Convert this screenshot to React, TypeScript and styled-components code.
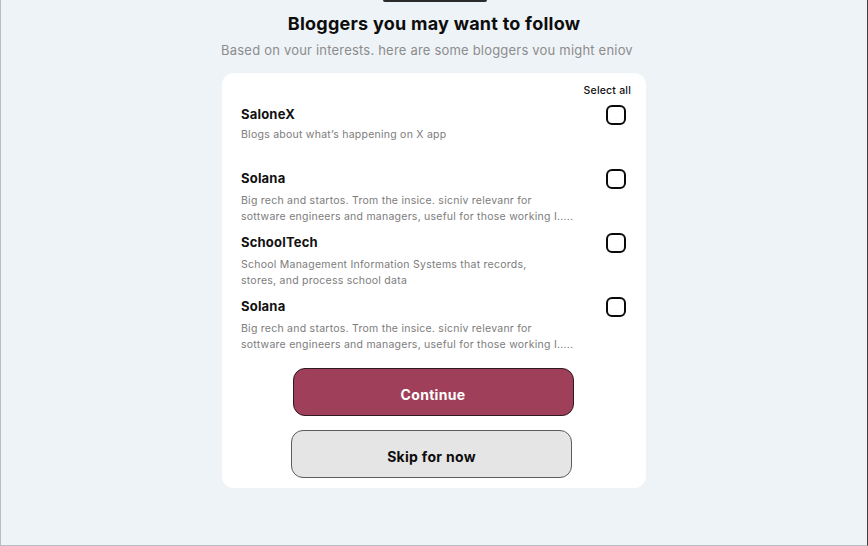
import React from 'react'
import styled, { createGlobalStyle } from 'styled-components'

type Blogger = {
	name: string
	text: string
}

const bloggers: Blogger[] = [
	{ name: 'SaloneX', text: 'Blogs about what’s happening on X app' },
	{
		name: 'Solana',
		text: 'Big rech and startos. Trom the insice. sicniv relevanr for\nsottware engineers and managers, useful for those working I.....',
	},
	{
		name: 'SchoolTech',
		text: 'School Management Information Systems that records,\nstores, and process school data',
	},
	{
		name: 'Solana',
		text: 'Big rech and startos. Trom the insice. sicniv relevanr for\nsottware engineers and managers, useful for those working I.....',
	},
]

const GlobalStyle = createGlobalStyle`
  * { box-sizing: border-box; }
  body {
    margin: 0;
    font-family: "Inter", "Noto Sans", sans-serif;
  }
`

export default function App() {
	return (
		<Page>
			<GlobalStyle />
			<TopTab />
			<Title>Bloggers you may want to follow</Title>
			<Subtitle>Based on vour interests. here are some bloggers vou might eniov</Subtitle>
			<Card>
				<SelectAll>Select all</SelectAll>
				<List>
					{bloggers.map((b, i) => (
						<Row key={i}>
							<Info>
								<Name>{b.name}</Name>
								<Text $multi={b.text.includes('\n')}>{b.text}</Text>
							</Info>
							<Check />
						</Row>
					))}
				</List>
				<Actions>
					<Button $primary>Continue</Button>
					<Button $shift>Skip for now</Button>
				</Actions>
			</Card>
		</Page>
	)
}

const Page = styled.div`
  width: 868px;
  height: 546px;
  background: #eef3f7;
  border-left: 1px solid #b9bdc1;
  border-bottom: 1px solid #b9bdc1;
  border-right: 1px solid #3d3d3d;
  display: flex;
  flex-direction: column;
  align-items: center;
  overflow: hidden;
`

const TopTab = styled.div`
  width: 104px;
  height: 2px;
  margin-left: 1px;
  background: #2b2b2b;
  border-radius: 0 0 4px 4px;
`

const Title = styled.h1`
  margin: 11px 0 0;
  font-size: 18px;
  line-height: 22px;
  font-weight: 700;
  letter-spacing: 0.25px;
  color: #0d0d0d;
`

const Subtitle = styled.p`
  margin: 7px 14px 0 0;
  font-size: 13px;
  line-height: 16px;
  letter-spacing: 0.2px;
  color: #8c8c8c;
`

const Card = styled.div`
  width: 424px;
  margin-top: 15px;
  background: #fff;
  border-radius: 12px;
  padding: 12px 15px 10px 19px;
  display: flex;
  flex-direction: column;
`

const SelectAll = styled.div`
  align-self: flex-end;
  font-size: 10.5px;
  line-height: 12px;
  font-weight: 500;
  letter-spacing: 0.2px;
  color: #111;
`

const List = styled.div`
  margin-top: 5px;
  display: flex;
  flex-direction: column;
`

const Row = styled.div`
  height: 64px;
  display: flex;
  justify-content: space-between;
  align-items: flex-start;
  padding-right: 5px;
`

const Info = styled.div`
  padding-top: 4px;
`

const Name = styled.div`
  font-size: 13px;
  line-height: 16px;
  font-weight: 700;
  letter-spacing: 0.2px;
  color: #111;
`

const Text = styled.p<{ $multi?: boolean }>`
  margin: ${(p) => (p.$multi ? '7px' : '5px')} 0 0;
  font-size: 10.5px;
  line-height: 15.5px;
  letter-spacing: 0.25px;
  white-space: pre-line;
  color: #7c7c7c;
`

const Check = styled.span`
  width: 20px;
  height: 20px;
  margin-top: 3px;
  border: 2px solid #0a0a0a;
  border-radius: 6px;
`

const Actions = styled.div`
  margin: 10px 0 0 -6px;
  display: flex;
  flex-direction: column;
  align-items: center;
  gap: 14px;
`

const Button = styled.button<{ $primary?: boolean; $shift?: boolean }>`
  width: 281px;
  height: 48px;
  margin-right: ${(p) => (p.$shift ? '3px' : '0')};
  padding: 4px 0 0;
  border-radius: 12px;
  border: 1px solid ${(p) => (p.$primary ? '#2e1a20' : '#5c5c5c')};
  background: ${(p) => (p.$primary ? '#a03f5a' : '#e5e5e5')};
  color: ${(p) => (p.$primary ? '#fff' : '#0d0d0d')};
  font-family: inherit;
  font-size: 14px;
  font-weight: 700;
  letter-spacing: 0.3px;
`
